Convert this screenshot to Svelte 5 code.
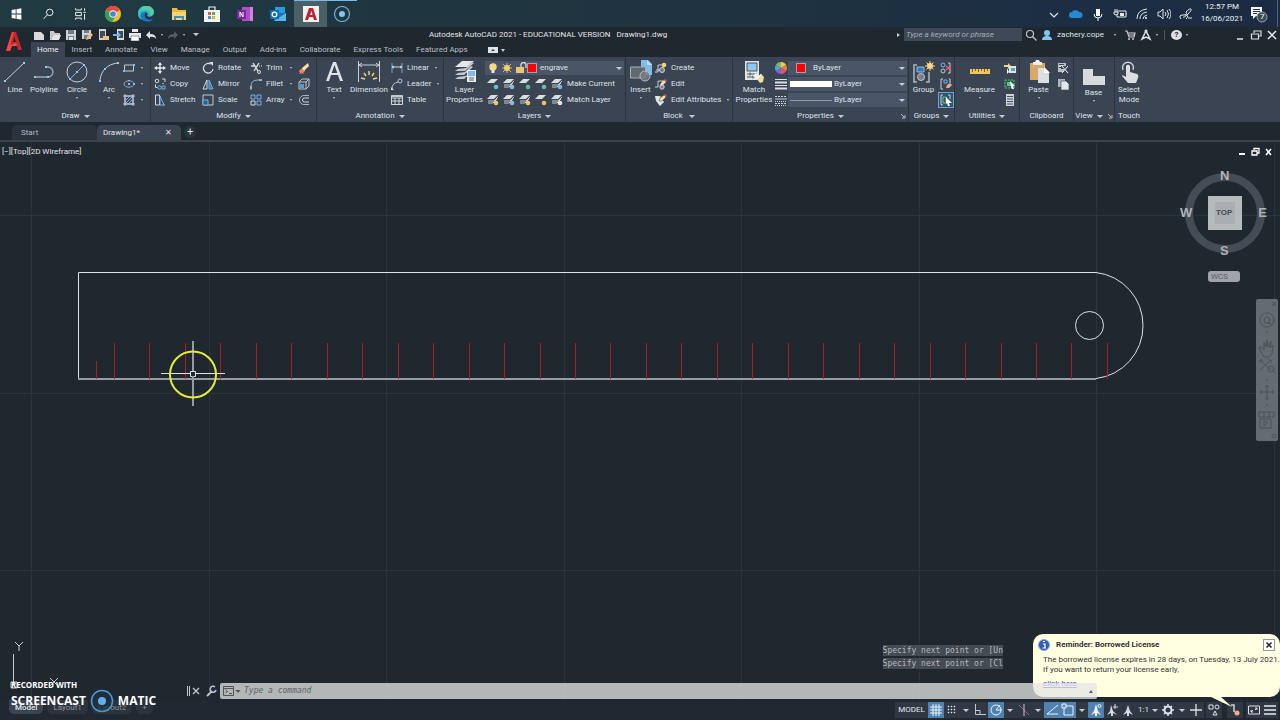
<script>
	const big = {
		line: '<path d="M2 21 21 3" stroke="#c9cfd6"/><path d="M1 20h2v2H1zM20 2h2v2h-2z" fill="#9fd0f5"/>',
		polyline: '<path d="M3 17h13a5 5 0 0 0 0-10h-3" fill="none" stroke="#9aaabd" stroke-width="1.3"/><path d="M2 16h2v2H2zM15 16h2v2h-2zM13 6h2v2h-2z" fill="#8fc6f2"/>',
		circle: '<circle cx="12" cy="12" r="10" fill="none" stroke="#c9cfd6"/><path d="M5 19 19 5" stroke="#7fb4dd"/><path d="M4 18h2v2H4zM11 11h2v2h-2zM18 4h2v2h-2z" fill="#8fc6f2"/>',
		arc: '<path d="M3 20C4 11 10 4 21 3" fill="none" stroke="#c9cfd6"/><path d="M2 20h2v2H2zM7 8h2v2H7zM20 2h2v2h-2z" fill="#8fc6f2"/>',
		text: '<path d="M4 21 11 2h3l7 19h-3l-2-6H9l-2 6zM9.700 13h5.600L12.500 5z" fill="#dfe3e7"/>',
		dimension: '<path d="M1.500 1v21M22.500 1v21M2 5h20M5 3 2 5l3 2M19 3l3 2-3 2" fill="none" stroke="#c9cfd6"/><path d="M12 11v4M7 13l2 3M17 13l-2 3M4 18l4 1M20 18l-4 1" stroke="#f0d080" stroke-width="1.500"/>',
		layers: '<path d="M9 1h12l-7 6H2z" fill="#e4e7e9"/><path d="M5 9 2 11h10l9-8-3-1-5 6zM5 13l-3 2h9l9-8-2-1-6 6zM5 17l-3 2h9l6-5-5 2z" fill="#c3c8cd"/><path d="M14 10h9v12h-9z" fill="#e9ecee"/><path d="M15 11h7v5h-7z" fill="#79bdf0"/><path d="M16 18h5M16 20h5" stroke="#667"/>',
		insert: '<path d="M12 0h7l4 4v11H12z" fill="#7ebdeb"/><path d="M18 0v5h5z" fill="#b9e0fb"/><path d="M1.500 7h15v11h-15z" fill="#626970" stroke="#a9afb5"/><circle cx="16" cy="16" r="5" fill="#767d84" fill-opacity=".8" stroke="#b5babf"/>',
		match: '<path d="M3 1h14v19H3z" fill="#e2e4e6"/><path d="M5 3h10v8H5z" fill="#8fc8ef" stroke="#4d5661"/><path d="M5 14h10M5 17h9M8 12.500v3M11 15.500v3" stroke="#4d5661"/><path d="m11 16 3-3 3 3-3 3z" fill="#eee"/><path d="m14 18 5-4 3 3-1 5-3 1z" fill="#f2d9a0"/><path d="m14 18 5-4 1 1-5 4z" fill="#fff"/>',
		group: '<path d="M5 5H2v17h3M15 5h2M14 22h3V12" fill="none" stroke="#aeb6be" stroke-width="1.500"/><path d="M5 7h7v5H5z" fill="#3e78a4" stroke="#83c0ed"/><circle cx="9" cy="17" r="3.500" fill="#777f87" stroke="#bdc4ca"/><circle cx="18" cy="6" r="3" fill="#f7d487"/><path d="M18 1v10M13 6h10M14.500 2.500l7 7M21.500 2.500l-7 7" stroke="#f7d487"/>',
		measure: '<path d="M2 9h20v5H2z" fill="#f3c65b"/><path d="M4.500 9v3M7.500 9v2M10.500 9v3M13.500 9v2M16.500 9v3M19.500 9v2" stroke="#7a6330"/>',
		paste: '<path d="M3 3h15v17H3z" fill="#d9a868"/><path d="M6 5V2h2l1-2h3l1 2h2v3z" fill="#eceff1"/><path d="M11 8h7l4 4v11H11z" fill="#dcdfe2"/><path d="M17 7v6h6z" fill="#fff"/>',
		base: '<path d="M1 6h10v7h12v9H1z" fill="#d8dbde"/>',
		touch: '<path d="M6 10a5.500 5.500 0 1 1 10 0" fill="none" stroke="#cdd2d6" stroke-width="1.400"/><path d="M9 16V6q2-3 4 0v6l7 2q2 1 1 4l-2 5H11l-6-7q0-2 4 1z" fill="#dcdfe2"/>'
	};

	const small = {
		rect: '<path d="M1.500 3h9v6h-9z" fill="none" stroke="#c5ccd3"/><path d="M0 8h2v2H0zM10 2h2v2h-2z" fill="#7fbdf0"/>',
		ellipse: '<ellipse cx="6" cy="6" rx="5" ry="3.200" fill="none" stroke="#8fa7bf"/><path d="M5 5h2v2H5zM5 2h2v1H5zM10 5h2v2h-2z" fill="#7fbdf0"/>',
		hatch: '<path d="M2 2h8v8H2zM0 2h12M0 10h12M2 0v12M10 0v12" fill="none" stroke="#c5ccd3"/><path d="m3 6 3-3M3 9l6-6M6 9l3-3" stroke="#6fb0e5"/>',
		move: '<path d="M6 1v10M1 6h10" stroke="#e6eaee" stroke-width="1.300"/><path d="m6 0 2 3H4zM6 12 4 9h4zM0 6l3-2v4zM12 6 9 8V4z" fill="#e6eaee"/>',
		copy: '<circle cx="3" cy="3" r="1.800" fill="none" stroke="#d5dade"/><path d="M8 1h3v3M1.500 6.500v3h2" fill="none" stroke="#d5dade"/><circle cx="5.500" cy="9.500" r="1.700" fill="none" stroke="#6db4ea"/><path d="M8 8h3v3H8zM8 5.500h2" fill="none" stroke="#6db4ea"/>',
		stretch: '<path d="M1.500 1h4v10h-4z" fill="none" stroke="#d5dade"/><path d="m6 2 4 9H6zM9 11h2" fill="none" stroke="#6db4ea"/>',
		rotate: '<path d="M8.500 2A4.800 4.800 0 1 0 11 7" fill="none" stroke="#dde1e5" stroke-width="1.200"/><path d="M7 0h4v4z" fill="#dde1e5"/>',
		mirror: '<path d="M5 2v9H1z" fill="none" stroke="#d5dade"/><path d="M7 2v9h4z" fill="#3e78a4" stroke="#6db4ea"/>',
		scale: '<path d="M1 1h10v10H1z" fill="none" stroke="#c5ccd3"/><path d="M1 6h5v5H1z" fill="#345f82" stroke="#6db4ea"/>',
		trim: '<path d="m3 1 5 8M9 1 4 9M1 4h4" stroke="#dde1e5" stroke-width="1.400"/><circle cx="9" cy="10" r="1.500" fill="none" stroke="#dde1e5"/><path d="M7 4h5" stroke="#dde1e5" stroke-dasharray="1"/>',
		fillet: '<path d="M1 12V8q0-6 7-6h4" fill="none" stroke="#8fb6d6"/><path d="M1 11V8M9 2h3" stroke="#dde1e5"/>',
		array: '<path d="M1 1h4v4H1zM7 1h4v4H7zM7 7h4v4H7z" fill="none" stroke="#6db4ea"/><path d="M1 7h4v4H1z" fill="none" stroke="#d5dade"/>',
		erase: '<path d="m1 9 3-3 3 3-2 2H2z" fill="#ef7d6d"/><path d="m4 6 6-5 1 3-5 5z" fill="#f4e3a4"/><path d="M1 11.500h5" stroke="#90673f"/>',
		explode: '<path d="M1 4h7v7H1zM1 4l3-3h7v7l-3 3M8 4l3-3" fill="none" stroke="#bcc6cf"/><path d="M2 6h4v4H2z" fill="#4f9bd3"/>',
		offset: '<path d="M11 1.500H6a4.500 4.500 0 0 0 0 9h5" fill="none" stroke="#aab5bf"/><path d="M11 4H6.500a2 2 0 0 0 0 4H11" fill="none" stroke="#d5dade"/>',
		linear: '<path d="M1 1v10M11 1v10" stroke="#71a9d6"/><path d="M1 5h10M3 4 1 5l2 1M9 4l2 1-2 1" fill="none" stroke="#d5dade"/>',
		leader: '<path d="M1 11q0-6 6-7" fill="none" stroke="#b9c1c8"/><circle cx="9" cy="3" r="2" fill="none" stroke="#b9c1c8"/><path d="M0 9v3h3z" fill="#d5dade"/>',
		table: '<path d="M.500 1.500h11v9H.500zM.500 4h11M.500 7h11M4 4v7M8 4v7" fill="none" stroke="#d0d6db"/><path d="M1 1h10v2H1z" fill="#c1c8ce"/>',
		bulb: '<circle cx="6" cy="5" r="3.700" fill="#f8d98a"/><path d="M4.500 8h3v3h-3z" fill="#e5e7e9"/>',
		sun: '<circle cx="6" cy="6" r="3" fill="#f5cf6d"/><path d="M6 1v10M1 6h10M2 2l8 8M10 2l-8 8" stroke="#f5cf6d" stroke-width=".800"/>',
		lock: '<path d="M1 5h8v6H1z" fill="#eec36d"/><path d="M6 5V3a2 2 0 0 1 5 0v3" fill="none" stroke="#d5dade" stroke-width="1.300"/>',
		create: '<path d="M3 3h5v5H1M3 3v7H0" fill="none" stroke="#c9cfd5"/><circle cx="7" cy="8" r="2.500" fill="#777e85" stroke="#c9cfd5"/><circle cx="9" cy="3" r="2.300" fill="#f3cf79"/>',
		edit: '<path d="M3 3h5M3 3v6H0" fill="none" stroke="#c9cfd5"/><circle cx="7" cy="9" r="2.200" fill="#777e85" stroke="#c9cfd5"/><path d="m5 8 1-3 3-3 2 2-3 3z" fill="#efe1b5"/><path d="m9 2 1-1 2 2-1 1z" fill="#e45b54"/>',
		attr: '<path d="M0 2h5l4 6-4 4-4-5z" fill="#e2e5e8"/><path d="m4 7 1-3 4-3 2 2-4 4z" fill="#f3dfaa" stroke="#374150" stroke-width=".500"/><path d="m9 1 1-1 2 2-1 1z" fill="#e45b54"/>',
		wheel: '<path d="M6 6V0a6 6 0 0 1 5.200 3z" fill="#f7c843"/><path d="m6 6 5.200-3a6 6 0 0 1 0 6z" fill="#ef7d45"/><path d="m6 6 5.200 3A6 6 0 0 1 6 12z" fill="#e2527d"/><path d="M6 6v6A6 6 0 0 1 .8 9z" fill="#7569cf"/><path d="M6 6 .8 9a6 6 0 0 1 0-6z" fill="#50a5de"/><path d="M6 6 .8 3A6 6 0 0 1 6 0z" fill="#75c064"/>',
		weight: '<path d="M0 1.500h12" stroke="#dde1e5"/><path d="M0 4.500h12M0 10.500h12" stroke="#dde1e5" stroke-width="2"/><path d="M0 7.500h12" stroke="#dde1e5"/>',
		type: '<path d="M0 2.500h12M0 9.500h12" stroke="#c9cfd5" stroke-dasharray="2 1"/><path d="M0 5h12" stroke="#c9cfd5"/><path d="M0 7.500h12M0 11.500h12" stroke="#c9cfd5" stroke-dasharray="1"/>',
		ungroup: '<circle cx="3" cy="3" r="2" fill="none" stroke="#6db4ea"/><circle cx="3" cy="9" r="2" fill="none" stroke="#bfc6cc"/><path d="M8 1h2v10H8" fill="none" stroke="#cbd1d6"/><path d="m6 4 5 4M11 4 6 8" stroke="#ea5d70" stroke-width="1.300"/>',
		groupedit: '<path d="M3 1H1v10h2M9 1h1v4" fill="none" stroke="#cbd1d6"/><path d="M4 2h3v3H4z" fill="none" stroke="#6db4ea"/><path d="m6 10 1-3 3-2 2 2-3 3z" fill="#efad86"/>',
		groupsel: '<path d="M3 1H1v10h2M8 1h2v4" fill="none" stroke="#cbd1d6"/><path d="M3 3h3v6H3z" fill="none" stroke="#68bf8b"/><path d="m6 3 6 6H9l1 3H8L7 9l-1 1z" fill="#fff"/>',
		quick: '<path d="M0 3h4V1l3 3-3 3V5H0z" fill="#f0d68d"/><path d="M5 4h7v7H5z" fill="#e2e5e8"/><path d="M7 6h4v3H7z" fill="#5f9fcd"/><path d="M3 6v6l2-2z" fill="#fff"/>',
		selectall: '<path d="M1 2h9v8H1z" fill="#285e49" stroke="#5bb487" stroke-dasharray="2 1"/><path d="M3 4h4v4H3z" fill="#65bb8a"/><path d="m6 3 5 5H9l1 3H8L7 9z" fill="#fff"/>',
		calc: '<path d="M2 0h8v12H2z" fill="#cdd2d6"/><path d="M3 2.500h6M3 5h6M3 7.500h6M3 10h6" stroke="#47505d"/>',
		cut: '<path d="M1 1h8v3H4v3h3v3H1z" fill="#b8bec4"/><path d="m5 4 6 7M11 4l-6 7M2 3h5M2 5h2" stroke="#eceff1"/><path d="M2 2.500h5M2 5.500h3" stroke="#3b4453"/>',
		copyclip: '<path d="M1 1h7v8H1z" fill="#aeb5bb"/><path d="M4 3h5l3 3v6H4z" fill="#e3e6e9" stroke="#3b4453" stroke-width=".600"/>'
	};

	// [colour, stacked sheets] for the ten layer tools
	const layerTools = [
		['#5fc5c8', false], ['#8eb8dc', true], ['#5fb7a0', false], ['#69bcb4', false], ['#7ab5df', true],
		['#f2c76a', true], ['#8eb8dc', true], ['#f2c76a', true], ['#edc065', false], ['#e2e5e8', true]
	];

	const quick = {
		fresh: '<path d="M1 3h7l3 3v5H1z" fill="#d8dbde"/>',
		open: '<path d="M1 2h4l1 2h5v2H4l-2 5H1z" fill="#c4c9ce"/><path d="M4 6h8l-2 5H2z" fill="#e2e5e8"/>',
		save: '<path d="M1 1h10v10H1z" fill="#cfd3d7"/><path d="M3 1h6v4H3zM3 7h6v4H3z" fill="#737b84"/><path d="M4 8h4v3H4z" fill="#e5e8ea"/>',
		saveas: '<path d="M1 1h9v9H1z" fill="#cfd3d7"/><path d="M3 1h5v3H3zM3 6h5v4H3z" fill="#737b84"/><path d="m5 11 1-3 4-4 2 2-4 4z" fill="#efbc7e"/>',
		web: '<path d="M2 0h7v11H2z" fill="#cfd3d7"/><path d="M3 2h5v7H3z" fill="#454d57"/><path d="M6 7h6v4H6z" fill="#e8c578"/>',
		webin: '<path d="M4 0h7v11H4z" fill="#d8dbde"/><path d="M5 2h5v7H5z" fill="#454d57"/><path d="M0 5h5V3l3 3-3 3V7H0z" fill="#6db4ea"/>',
		print: '<path d="M3 0h6v3H3zM0 4h12v5H0z" fill="#e6e8ea"/><path d="M2 7h8v5H2z" fill="#fff" stroke="#66707b" stroke-width=".700"/>',
		undo: '<path d="m1 6 4-4v3q6 0 6 5-2-3-6-2v2z" fill="#dfe3e7"/>',
		redo: '<path d="M11 6 7 2v3Q1 5 1 10q2-3 6-2v2z" fill="#555e68"/>'
	};

	const apps = {
		windows: '<path d="m2 3 5-.700v5.200H2zM8 2.200 14 1v6.500H8zM2 8.500h5v5.200L2 13zM8 8.500h6V15l-6-1.200z" fill="#fff"/>',
		search: '<circle cx="9.500" cy="6" r="4" fill="none" stroke="#f2f4f5" stroke-width="1.200"/><path d="M6.500 9 2 14" stroke="#f2f4f5" stroke-width="1.200"/>',
		task: '<path d="M2 1v2h7V1M2 6h7v4H2zM2 15v-2h7v2M13 1v3M13 8v7M11.500 6h3" fill="none" stroke="#f2f4f5" stroke-width="1.200"/>',
		chrome: '<circle cx="8" cy="8" r="8" fill="#f2bd2e"/><path d="M8 8 1 4A8 8 0 0 1 15 4z" fill="#df4d3e"/><path d="M1 4a8 8 0 0 0 6 12l4-6-3-1z" fill="#399c58"/><circle cx="8" cy="8" r="3.700" fill="#eef0ef"/><circle cx="8" cy="8" r="2.800" fill="#4387dc"/>',
		edge: '<path d="M0 9A8 8 0 0 1 15.800 6c.8 4-4 6-6.800 4 2-2 0-4-2-4-3 0-6 4-2 8-3-.5-5-3-5-5z" fill="#2fbfc3"/><path d="M5 6q-4 2-2 6 3 5 10 3l2-2c-6 2-9-1-8-5q0-2 2-2-1-1-4 0z" fill="#1c78c6"/><path d="M1 6Q3 0 9 0q5 0 7 5c0 3-2 5-4 4 2-4-4-7-11-3z" fill="#58cba3"/>',
		folder: '<path d="M1 2h5l1 2h8v10H1z" fill="#edb83e"/><path d="M1 6h14v8H1z" fill="#f8d568"/><path d="M3 10h10v4h-2v-2H5v2H3z" fill="#438ac1"/>',
		store: '<path d="M5 4V1h6v3" fill="none" stroke="#eef1f3" stroke-width="1.200"/><path d="M0 4h16v12H0z" fill="#f3f4f4"/><path d="M4 6h3v3H4z" fill="#e65b3b"/><path d="M8 6h3v3H8z" fill="#72a93b"/><path d="M4 10h3v3H4z" fill="#389ad2"/><path d="M8 10h3v3H8z" fill="#e8ae32"/>',
		onenote: '<path d="M5 1h11v14H5z" fill="#ae4fc5"/><path d="M13 1h3v14h-3z" fill="#cf83df"/><path d="M0 4h9v9H0z" fill="#7d26a0"/><path d="M3 11V6l3 5V6" fill="none" stroke="#fff"/>',
		outlook: '<path d="M5 1h10v9H5z" fill="#2c9ade"/><path d="M4 7h12v8H4z" fill="#1a70b9"/><path d="m4 15 12-8v8z" fill="#55b8ec"/><path d="M0 4h9v9H0z" fill="#126cb7"/><circle cx="4.500" cy="8.500" r="2.300" fill="none" stroke="#fff" stroke-width="1.300"/>',
		acad: '<path d="M0 0h16v16H0z" fill="#f3efed"/><path d="M2 14 6 2h4l4 12h-3l-1-3H6l-1 3zM7 9h2.500L8.500 5z" fill="#b72531"/>',
		screencast: '<circle cx="8" cy="8" r="7.500" fill="none" stroke="#70aed7" stroke-width="1.200"/><circle cx="8" cy="8" r="3" fill="#86c5ef"/>'
	};

	const tray = {
		up: '<path d="m3 6 4 4 4-4" fill="none" stroke="#dfe4e8" stroke-width="1.200"/>',
		cloud: '<path d="M3 11a3 3 0 0 1 0-6 4 4 0 0 1 7 0 3 3 0 0 1 1 6z" fill="#2489d6"/>',
		mic: '<path d="M5 2h4v7H5z" fill="#fff"/><path d="M3 7q0 4 4 4t4-4M7 11v3" fill="none" stroke="#fff"/>',
		battery: '<path d="M5 4h8v6H4V7M14 6v2M2 2v3M4 2v3M1 5h4v2q-2 2-4 0z" fill="none" stroke="#e4e8eb"/><path d="M7 6h4v3H7z" fill="#e4e8eb"/>',
		wifi: '<path d="M2 12Q2 3 12 2M5 12q0-6 7-7M8 12q0-3 4-4" fill="none" stroke="#dce1e6"/><circle cx="11" cy="11" r="1" fill="#fff"/>',
		sound: '<path d="M1 5h2l3-3v10L3 9H1zM8 5q2 2 0 4M10 3q3 4 0 8M12 2q4 5 0 10" fill="none" stroke="#dce1e6"/>',
		pen: '<path d="M2 12q-3-4 2-4t3-3q4-4 5-3t-3 5-5 3M7 12q4-4-1-4M9 11h4" fill="none" stroke="#e4e8eb"/>'
	};

	const status = {
		grid: '<path d="M4 1v12M7 1v12M10 1v12M1 4h12M1 7h12M1 10h12" stroke="#f0f3f6"/>',
		snap: '<path d="M3 3h1v1H3zM6 3h1v1H6zM9 3h1v1H9zM3 6h1v1H3zM6 6h1v1H6zM9 6h1v1H9zM3 9h1v1H3zM6 9h1v1H6zM9 9h1v1H9z" fill="#e0e4e8" stroke="#e0e4e8" stroke-width=".500"/>',
		ortho: '<path d="M2.500 1v10.500H13M3 7.500h4v4" fill="none" stroke="#c2c8cf"/>',
		polar: '<circle cx="7" cy="7" r="5" fill="none" stroke="#eef2f6"/><path d="M7 7h6M7 7l4-5" stroke="#eef2f6"/>',
		iso: '<path d="m2 2 10 10" stroke="#b85763"/><path d="M7 1v12" stroke="#c2c8cf"/>',
		angle: '<path d="M13 2 2 11h11" fill="none" stroke="#eef2f6"/>',
		osnap: '<path d="M3 3h9v9H3z" fill="none" stroke="#eef2f6"/><path d="M1 1h4v4H1z" fill="#5d8fbd" stroke="#eef2f6"/>',
		ann: '<path d="m7 1 2 7 3 4-4-2v3H6v-3l-4 2 3-4z" fill="#f0f3f6"/><circle cx="10.500" cy="3" r="1.500" fill="none" stroke="#f0f3f6"/>',
		annadd: '<path d="m6 2 2 6 4 4-4-2v3H6v-3l-4 2 3-4z" fill="#d5dade"/><path d="M10 1v5M8 4h5" stroke="#d5dade"/>',
		annscale: '<path d="m7 2 2 6 3 4-4-2v3H6v-3l-4 2 3-4z" fill="#d5dade"/>',
		gear: '<circle cx="7" cy="7" r="3.500" fill="none" stroke="#e0e4e8" stroke-width="2"/><path d="M7 1v3M7 10v3M1 7h3M10 7h3M3 3l2 2M9 9l2 2M11 3 9 5M5 9l-2 2" stroke="#e0e4e8" stroke-width="1.500"/>',
		plus: '<path d="M7 1v12M1 7h12" stroke="#dce0e4" stroke-width="1.300"/>',
		shapes: '<path d="M2 2h4v4H2zM6 12l2-4 2 4z" fill="none" stroke="#dce0e4"/><circle cx="10" cy="4" r="2" fill="none" stroke="#dce0e4"/>',
		license: '<path d="M3 2h3v7" fill="none" stroke="#cdd2d6" stroke-width="1.500"/><circle cx="9" cy="10" r="2.500" fill="#eeae89"/>',
		clean: '<path d="M1.500 3h11v8h-11zM4 9V7M4 9h2M10 5H8M10 5v2M4 9l2-2M10 5 8 7" fill="none" stroke="#dce0e4"/>',
		menu: '<path d="M1 3h12M1 7h12M1 11h12" stroke="#e4e8eb" stroke-width="1.600"/>'
	};

	const tabs = ['Home', 'Insert', 'Annotate', 'View', 'Manage', 'Output', 'Add-ins', 'Collaborate', 'Express Tools', 'Featured Apps'];
	const columns = [31, 209, 386, 564, 741, 919, 1096, 1274];
	const marks = Array.from({ length: 29 }, (_, i) => Math.round(114 + i * 35.46));
	let command = $state('');
	let keyword = $state('');
</script>

{#snippet pic(set, name, size, box = size)}
	<svg class="pic" width={size} height={size} viewBox="0 0 {box} {box}" aria-hidden="true">{@html set[name]}</svg>
{/snippet}

{#snippet large(name, label, second = '', caret = true)}
	<button class="large">
		{@render pic(big, name, 24)}
		<span>{label}</span>
		{#if second}<span>{second}</span>{:else if caret}<i class="caret"></i>{/if}
	</button>
{/snippet}

{#snippet tool(name, label = '', caret = false)}
	<button class="tool" aria-label={label || name}>
		{@render pic(small, name, 12)}
		{#if label}<span>{label}</span>{/if}
		{#if caret}<i class="caret"></i>{/if}
	</button>
{/snippet}

{#snippet layerTool(i)}
	<button class="tool" aria-label="Layer tool {i + 1}">
		<svg class="pic" width="12" height="12" viewBox="0 0 12 12">
			<path d="M4 1h7L7 5H0z" fill="#d9dde0" />
			{#if layerTools[i][1]}
				<path d="M1 7h6l4-4M1 9h5l4-4" fill="none" stroke="#c6cbd0" />
			{/if}
			<circle cx="9" cy="9" r="2.3" fill={layerTools[i][0]} />
		</svg>
	</button>
{/snippet}

{#snippet title(label, arrow = true, corner = false)}
	<div class="panel-title">
		<span>{label}</span>
		{#if arrow}<i class="caret wide"></i>{/if}
		{#if corner}
			<svg width="6" height="6" viewBox="0 0 6 6"><path d="m1 1 3 3M5 2v3H2" fill="none" stroke="#b9bfc7" /></svg>
		{/if}
	</div>
{/snippet}

{#snippet stat(name, on = false, caret = false)}
	<button class="stat {name}" class:on aria-label={name}>{@render pic(status, name, 14)}</button>
	{#if caret}<button class="stat drop" aria-label="{name} options"><i class="caret wide"></i></button>{/if}
{/snippet}

<div class="screen">
	<div class="taskbar">
		<div class="apps">
			{#each Object.keys(apps) as app}
				<button class="app" class:active={app === 'acad'} class:running={app === 'screencast'} aria-label={app}>
					{@render pic(apps, app, 16)}
				</button>
			{/each}
		</div>
		<div class="tray">
			{#each Object.keys(tray) as item}
				<button aria-label={item}>{@render pic(tray, item, 14)}</button>
			{/each}
			<div class="clock"><span>12:57 PM</span><span>16/06/2021</span></div>
			<button class="notes" aria-label="Notifications">
				<svg width="18" height="18" viewBox="0 0 18 18">
					<path d="M1 2h11v9H6l-3 3v-3H1z" fill="#f3f5f6" />
					<path d="M3 4.500h7M3 6.500h7M3 8.500h4" stroke="#26364b" />
					<circle cx="12" cy="12" r="5" fill="#3c4858" stroke="#98a2ae" />
				</svg>
				<em>7</em>
			</button>
		</div>
	</div>

	<header>
		<button class="logo" aria-label="Application menu">
			<svg width="18" height="22" viewBox="0 0 18 22">
				<path d="M1 20 7 1h4l6 18h-4l-1-4H7l-2 5zM8 11h3L9.500 6z" fill="#c9252c" />
				<path d="M1 20 7 1h2L5 14l6-2 1 3H7l-2 5z" fill="#ee4a43" />
			</svg>
		</button>
		<div class="head">
			<div class="titlebar">
				<div class="quick">
					{#each Object.keys(quick) as q}
						<button aria-label={q}>{@render pic(quick, q, 12)}</button>
						{#if q === 'undo' || q === 'redo'}<i class="caret"></i>{/if}
					{/each}
					<i class="caret wide bar"></i>
				</div>
				<h1>Autodesk AutoCAD 2021 - EDUCATIONAL VERSION <span>Drawing1.dwg</span></h1>
				<div class="account">
					<i class="right"></i>
					<input aria-label="Search help" placeholder="Type a keyword or phrase" bind:value={keyword} />
					<svg width="12" height="12" viewBox="0 0 12 12"><circle cx="5" cy="5" r="3.500" fill="none" stroke="#bfc5cb" stroke-width="1.200" /><path d="m7.500 7.500 4 4" stroke="#bfc5cb" stroke-width="1.300" /></svg>
					<button class="user">
						<svg width="12" height="12" viewBox="0 0 12 12"><circle cx="6" cy="4" r="3" fill="#84c7f0" /><path d="M1 11q0-4 5-4t5 4z" fill="#84c7f0" /></svg>
						<span>zachery.cope</span>
						<i class="caret"></i>
					</button>
					<svg width="12" height="12" viewBox="0 0 12 12"><path d="M1 2h2l2 6h5l1-4H4M5 6h5" fill="none" stroke="#c9ced3" stroke-width="1.200" /><circle cx="5" cy="10" r="1" fill="#c9ced3" /><circle cx="9" cy="10" r="1" fill="#c9ced3" /></svg>
					<button class="share" aria-label="Autodesk apps">
						<svg width="12" height="12" viewBox="0 0 12 12"><path d="m6 2-4 8 4-2 4 2z" fill="none" stroke="#dce0e3" stroke-width="1.500" /><circle cx="6" cy="2" r="1.500" fill="#dce0e3" /></svg>
						<i class="caret"></i>
					</button>
					<button class="help" aria-label="Help"><b>?</b><i class="caret"></i></button>
					<div class="window">
						<svg width="12" height="12" viewBox="0 0 12 12"><path d="M3 10h6" stroke="#e2e5e8" stroke-width="1.500" /></svg>
						<svg width="12" height="12" viewBox="0 0 12 12"><path d="M4 4V2h7v5H9M1.500 5h7v5h-7z" fill="none" stroke="#dce0e3" stroke-width="1.200" /></svg>
						<svg width="12" height="12" viewBox="0 0 12 12"><path d="m2 2 8 8M10 2l-8 8" stroke="#e9ecee" stroke-width="1.500" /></svg>
					</div>
				</div>
			</div>
			<nav>
				{#each tabs as tab, i}
					<button class:current={i === 0}>{tab}</button>
				{/each}
				<svg width="24" height="8" viewBox="0 0 24 8"><path d="M3 1h10v6H3z" fill="#e1e4e7" /><path d="m6 5 2-2 2 2z" fill="#343c47" /><path d="M16 3h4l-2 3z" fill="#cbd0d5" /></svg>
			</nav>
		</div>
	</header>

	<div class="ribbon">
		<section class="draw">
			<div class="body">
				{@render large('line', 'Line', '', false)}
				{@render large('polyline', 'Polyline', '', false)}
				{@render large('circle', 'Circle')}
				{@render large('arc', 'Arc')}
				<div class="stack">
					{@render tool('rect', '', true)}
					{@render tool('ellipse', '', true)}
					{@render tool('hatch', '', true)}
				</div>
			</div>
			{@render title('Draw')}
		</section>
		<section class="modify">
			<div class="body">
				<div class="stack">{@render tool('move', 'Move')}{@render tool('copy', 'Copy')}{@render tool('stretch', 'Stretch')}</div>
				<div class="stack">{@render tool('rotate', 'Rotate')}{@render tool('mirror', 'Mirror')}{@render tool('scale', 'Scale')}</div>
				<div class="stack">{@render tool('trim', 'Trim', true)}{@render tool('fillet', 'Fillet', true)}{@render tool('array', 'Array', true)}</div>
				<div class="stack">{@render tool('erase')}{@render tool('explode')}{@render tool('offset')}</div>
			</div>
			{@render title('Modify')}
		</section>
		<section class="annotation">
			<div class="body">
				{@render large('text', 'Text')}
				{@render large('dimension', 'Dimension', '', false)}
				<div class="stack">{@render tool('linear', 'Linear', true)}{@render tool('leader', 'Leader', true)}{@render tool('table', 'Table')}</div>
			</div>
			{@render title('Annotation')}
		</section>
		<section class="layers">
			<div class="body">
				{@render large('layers', 'Layer', 'Properties')}
				<div class="stack">
					<button class="combo">
						{@render pic(small, 'bulb', 12)}{@render pic(small, 'sun', 12)}{@render pic(small, 'lock', 12)}
						<i class="swatch"></i><span>engrave</span><i class="caret wide"></i>
					</button>
					<div class="row">
						{#each [0, 1, 2, 3, 4] as i}{@render layerTool(i)}{/each}
						<span>Make Current</span>
					</div>
					<div class="row">
						{#each [5, 6, 7, 8, 9] as i}{@render layerTool(i)}{/each}
						<span>Match Layer</span>
					</div>
				</div>
			</div>
			{@render title('Layers')}
		</section>
		<section class="block">
			<div class="body">
				{@render large('insert', 'Insert')}
				<div class="stack">{@render tool('create', 'Create')}{@render tool('edit', 'Edit')}{@render tool('attr', 'Edit Attributes', true)}</div>
			</div>
			{@render title('Block')}
		</section>
		<section class="properties">
			<div class="body">
				{@render large('match', 'Match', 'Properties')}
				<div class="stack">{@render tool('wheel')}{@render tool('weight')}{@render tool('type')}</div>
				<div class="stack fields">
					<button class="combo"><i class="swatch"></i><span>ByLayer</span><i class="caret wide"></i></button>
					<button class="combo"><i class="weight"></i><span>ByLayer</span><i class="caret wide"></i></button>
					<button class="combo"><i class="weight thin"></i><span>ByLayer</span><i class="caret wide"></i></button>
				</div>
			</div>
			{@render title('Properties', true, true)}
		</section>
		<section class="groups">
			<div class="body">
				{@render large('group', 'Group', '', false)}
				<div class="stack picked">{@render tool('ungroup')}{@render tool('groupedit')}{@render tool('groupsel')}</div>
			</div>
			{@render title('Groups')}
		</section>
		<section class="utilities">
			<div class="body">
				{@render large('measure', 'Measure')}
				<div class="stack">{@render tool('quick')}{@render tool('selectall')}{@render tool('calc')}</div>
			</div>
			{@render title('Utilities')}
		</section>
		<section class="clipboard">
			<div class="body">
				{@render large('paste', 'Paste')}
				<div class="stack">{@render tool('cut')}{@render tool('copyclip')}</div>
			</div>
			{@render title('Clipboard', false)}
		</section>
		<section class="view">
			<div class="body">{@render large('base', 'Base')}</div>
			{@render title('View', true, true)}
		</section>
		<section class="touch">
			<div class="body">{@render large('touch', 'Select', 'Mode')}</div>
			{@render title('Touch', false)}
		</section>
	</div>

	<div class="files">
		<button class="file">Start</button>
		<button class="file open"><span>Drawing1*</span><span>✕</span></button>
		<button class="add" aria-label="New drawing">+</button>
	</div>

	<main>
		<svg class="drawing" viewBox="0 142 1280 558" preserveAspectRatio="xMinYMin slice" role="img" aria-label="Ruler drawing">
			<g stroke="#2a323a">
				{#each columns as x}<path d="M{x + 0.5} 142v558" />{/each}
				<path d="M0 215.500h1280M0 393.500h1280M0 570.500h1280" />
			</g>
			<path d="M1096 272.500H78.500v106M1096 378.500a53 53 0 0 0 47-53 53 53 0 0 0-47-53" fill="none" stroke="#dde2e6" />
			<path d="M78 379h1018" stroke="#969ca2" stroke-width="2" />
			<g fill="#b01a20">
				<path d="M96 361h1v18h-1z" />
				{#each marks as x}<path d="M{x} 343h1v36h-1z" />{/each}
			</g>
			<circle cx="1089.500" cy="325.500" r="14" fill="none" stroke="#dde2e6" />
			<path d="M161 373.500h29M196 373.500h29M190.500 371.500h5v5h-5z" fill="none" stroke="#dde2e6" />
			<path d="M193 341v30M193 376v30" stroke="#969ca2" stroke-width="2" />
			<circle cx="193" cy="374.500" r="23" fill="none" stroke="#e8ea3a" stroke-width="2" />
			<g fill="none" stroke="#c8cdd2">
				<path d="M13.500 654v31M15 642l4 4 4-4M19 646v5M50 678l8 8M58 678l-8 8M11 682h6v6h-6z" />
			</g>
		</svg>

		<div class="viewport"><button>[−]</button><button>[Top]</button><button>[2D Wireframe]</button></div>
		<div class="inner">
			<svg width="40" height="10" viewBox="0 0 40 10"><path d="M4 7h6" stroke="#fff" stroke-width="2" /><path d="M17 4h5v4h-5zM19 3V1.500h5V6h-2" fill="none" stroke="#fff" stroke-width="1.300" /><path d="m31 2 5 6M36 2l-5 6" stroke="#fff" stroke-width="1.600" /></svg>
		</div>

		<div class="compass">
			<svg width="90" height="90" viewBox="0 0 90 90">
				<circle cx="45" cy="45" r="36" fill="none" stroke="#444c56" stroke-width="8" />
				<path d="M28 28h34v34H28z" fill="#b5babc" />
				<path d="M35 34h20v22H35z" fill="#a9aeb1" />
			</svg>
			<b class="n">N</b><b class="e">E</b><b class="s">S</b><b class="w">W</b><b class="top">TOP</b>
		</div>
		<button class="wcs">WCS</button>
		<div class="navbar">
			<svg width="22" height="142" viewBox="0 0 22 142" fill="none" stroke="#4b5357">
				<circle cx="11" cy="21" r="7" /><circle cx="11" cy="21" r="3" /><path d="M11 24q7 3 7-3M10 33h2M5 53l-2-4 2-1 3 3v-8l2 5 1-7 1 7 3-6-1 7 3-3-1 9-3 3H8zM4 61l11 10M15 61 4 71M4 64v-3h3M12 61h3v3" />
				<circle cx="15" cy="70" r="3" /><path d="m17 72 3 3M10 81h2M11 86v15M4 93h14M9 88l2-2 2 2M9 99l2 2 2-2M6 91l-2 2 2 2M16 91l2 2-2 2M10 106h2M3 113h15v5H3zM8 113v5M13 113v5M4 120h11v9H4zM8 122l4 2-4 3z" />
				<path d="m16 3 4 4M20 3l-4 4" /><circle cx="18" cy="137" r="2" />
			</svg>
		</div>

		<div class="history"><p>Specify next point or [Un</p><p>Specify next point or [Cl</p></div>

		<aside class="balloon">
			<div class="balloon-head">
				<svg width="12" height="12" viewBox="0 0 12 12"><circle cx="6" cy="6" r="5.500" fill="#2e5fb5" stroke="#8caad8" /><path d="M5 5h2v4h1M4.500 9H8M5 2.500h2" stroke="#fff" stroke-width="1.200" fill="none" /></svg>
				<strong>Reminder: Borrowed License</strong>
				<button aria-label="Close reminder"><svg width="8" height="8" viewBox="0 0 8 8"><path d="m1.500 1.500 5 5M6.500 1.500l-5 5" stroke="#222" stroke-width="1.500" /></svg></button>
			</div>
			<p>The borrowed license expires in 28 days, on Tuesday, 13 July 2021.</p>
			<p>If you want to return your license early,</p>
			<a href="#license">click here</a>
			<svg class="tail" width="24" height="12" viewBox="0 0 24 12"><path d="M0 0h11l12 11z" fill="#ffffe1" /></svg>
		</aside>

		<div class="command">
			<div class="grip">
				<svg width="34" height="16" viewBox="0 0 34 16" fill="none" stroke="#c0c6cc"><path d="M1.500 3v10M3.500 3v10" /><path d="m7 5 6 6M13 5l-6 6" stroke-width="1.300" /><path d="m21 13 5-5" stroke-width="1.800" /><path d="M29 4a3 3 0 1 0 1 3" stroke-width="1.500" /></svg>
			</div>
			<label>
				<svg width="18" height="12" viewBox="0 0 18 12"><path d="M.500 1.500h10v9H.500zM.500 3.500h10M2.500 5l2 1.500-2 1.500M6 8.500h3" fill="none" stroke="#4d5458" /><path d="M12.500 5h5L15 8z" fill="#4d5458" /></svg>
				<input aria-label="Command line" placeholder="Type a command" bind:value={command} />
				<i class="upward"></i>
			</label>
		</div>
	</main>

	<footer>
		<div class="layouts"><button class="model">Model</button><button>Layout1</button><button>Layout2</button><button>+</button></div>
		<div class="modes">
			<button class="stat word">MODEL</button>
			{@render stat('grid', true)}{@render stat('snap', false, true)}
			{@render stat('ortho')}{@render stat('polar', true, true)}
			{@render stat('iso', false, true)}{@render stat('angle', true)}{@render stat('osnap', true, true)}
			{@render stat('ann', true)}{@render stat('annadd')}{@render stat('annscale')}
			<button class="stat ratio">1:1<i class="caret wide"></i></button>
			{@render stat('gear', false, true)}{@render stat('plus')}{@render stat('shapes')}{@render stat('license')}
			{@render stat('clean')}{@render stat('menu')}
		</div>
	</footer>

	<div class="watermark">
		<small>RECORDED WITH</small>
		<div>
			<span>SCREENCAST</span>
			<svg width="24" height="24" viewBox="0 0 24 24"><circle cx="12" cy="12" r="10.500" fill="#20303f" fill-opacity=".7" stroke="#4c9ad0" stroke-width="1.500" /><circle cx="12" cy="12" r="4" fill="#5eb0ea" /></svg>
			<span>MATIC</span>
		</div>
	</div>
</div>

<style>
	:global(body) {
		margin: 0;
		background: #20282f;
	}
	.screen {
		position: relative;
		display: flex;
		flex-direction: column;
		height: 100vh;
		overflow: hidden;
		color: #dfe3e7;
		background: #20282f;
		font: 8px/10px Roboto, 'Open Sans', sans-serif;
	}
	button,
	input {
		margin: 0;
		padding: 0;
		border: 0;
		background: none;
		color: inherit;
		font: inherit;
	}
	button {
		display: flex;
		align-items: center;
		white-space: nowrap;
	}
	svg {
		display: block;
		flex: none;
	}
	.caret {
		flex: none;
		width: 0;
		border: 1px solid transparent;
		border-top: 2px solid #c8cdd3;
		border-bottom: 0;
	}
	.caret.wide {
		border-width: 3px 3px 0;
	}

	.taskbar {
		display: flex;
		flex: none;
		justify-content: space-between;
		height: 27px;
		background: linear-gradient(90deg, #203a42, #1f3440 50%, #1b2b43);
	}
	.apps,
	.tray {
		display: flex;
	}
	.app {
		justify-content: center;
		width: 33px;
		border-top: 1px solid transparent;
	}
	.app:nth-child(-n + 3) {
		width: 32px;
	}
	.app:nth-child(-n + 3) svg {
		width: 13px;
	}
	.app.active {
		background: #4a6066;
		border-color: #79b9e6;
	}
	.app.running {
		width: 30px;
		border-color: #79b9e6;
	}
	.tray {
		border-right: 1px solid #53627a;
		margin-right: 2px;
	}
	.tray button {
		justify-content: center;
		width: 22px;
	}
	.clock {
		display: flex;
		flex-direction: column;
		align-items: center;
		width: 50px;
		padding-top: 1px;
		color: #f0f2f4;
		font-size: 8px;
		line-height: 12px;
	}
	.tray .notes {
		position: relative;
		width: 30px;
		padding-left: 3px;
		box-sizing: border-box;
		justify-content: flex-start;
	}
	.notes em {
		position: absolute;
		left: 13px;
		top: 12px;
		font-style: normal;
		color: #fff;
	}

	header {
		display: flex;
		flex: none;
		height: 30px;
	}
	.logo {
		width: 31px;
		padding-left: 5px;
	}
	.head {
		flex: 1;
	}
	.titlebar {
		display: flex;
		align-items: center;
		height: 15px;
	}
	.quick,
	.account,
	.window {
		display: flex;
		align-items: center;
	}
	.quick {
		gap: 4px;
		width: 396px;
		padding-left: 2px;
	}
	.quick .bar {
		margin-left: 4px;
	}
	h1 {
		display: flex;
		gap: 6px;
		margin: 0;
		color: #e2e5e8;
		font-size: 8px;
		font-weight: 400;
		white-space: nowrap;
	}
	.account {
		margin-left: auto;
	}
	.right {
		border: 2px solid transparent;
		border-left: 3px solid #d0d4d8;
		border-right: 0;
		margin-right: 4px;
	}
	.account input {
		width: 114px;
		height: 13px;
		padding: 0 2px;
		margin-right: 3px;
		background: #3e4856;
		font-style: italic;
	}
	input::placeholder {
		color: #a6adb6;
		opacity: 1;
	}
	.user {
		gap: 4px;
		margin: 0 8px 0 4px;
	}
	.user .caret {
		margin-left: 6px;
	}
	.share {
		gap: 4px;
		margin: 0 6px 0 4px;
	}
	.help {
		gap: 4px;
		padding-left: 6px;
		border-left: 1px solid #4d555f;
		margin-right: 46px;
	}
	.help b {
		width: 11px;
		border-radius: 50%;
		background: #dce0e3;
		color: #252c35;
		text-align: center;
	}
	.window {
		gap: 4px;
		padding-right: 2px;
	}
	nav {
		display: flex;
		align-items: center;
		height: 15px;
		color: #b9bfc7;
	}
	nav button {
		height: 15px;
		padding: 0 6px 0 7px;
	}
	nav .current {
		padding: 0 6px;
		background: #3b4453;
		color: #eceff1;
	}
	nav svg {
		margin-left: 11px;
	}

	.ribbon {
		display: flex;
		flex: none;
		height: 65px;
		padding-left: 1px;
		background: #3b4453;
	}
	section {
		box-sizing: border-box;
		flex: none;
		display: flex;
		flex-direction: column;
		justify-content: space-between;
		border-right: 1px solid #2c343f;
	}
	.draw {
		width: 150px;
	}
	.modify {
		width: 166px;
	}
	.annotation {
		width: 127px;
	}
	.layers {
		width: 182px;
	}
	.block {
		width: 107px;
	}
	.properties {
		width: 176px;
	}
	.groups {
		width: 46px;
	}
	.utilities {
		width: 65px;
	}
	.clipboard {
		width: 54px;
	}
	.view {
		width: 41px;
	}
	.touch {
		flex: 1;
		align-items: flex-start;
		border: 0;
	}
	.body {
		display: flex;
		padding-top: 3px;
	}
	.panel-title {
		position: relative;
		display: flex;
		align-items: center;
		justify-content: center;
		gap: 4px;
		height: 12px;
	}
	.properties .panel-title svg {
		position: absolute;
		right: 2px;
	}
	.large {
		flex: none;
		flex-direction: column;
		width: 28px;
	}
	.large svg {
		margin-bottom: 1px;
	}
	.large .caret {
		margin-top: 2px;
	}
	.draw .large:nth-child(2) {
		width: 30px;
	}
	.draw .large:nth-child(3) {
		width: 36px;
	}
	.draw .stack .caret {
		margin-left: 2px;
	}
	.stack {
		display: flex;
		flex: 1;
		flex-direction: column;
		min-width: 0;
	}
	.tool,
	.row {
		display: flex;
		align-items: center;
		gap: 4px;
		height: 16px;
	}
	.modify .body {
		padding-left: 3px;
	}
	.modify .stack {
		flex: 0 0 48px;
	}
	.modify .stack:last-child {
		flex-basis: 16px;
	}
	.modify .stack:nth-child(3) .caret {
		margin-left: auto;
		margin-right: 6px;
	}
	.annotation .large {
		width: 34px;
	}
	.annotation .large:nth-child(2) {
		width: 36px;
		margin-right: 4px;
	}
	.annotation .stack .caret {
		margin-left: 2px;
	}
	.layers .large {
		width: 41px;
	}
	.layers .row {
		padding-left: 2px;
	}
	.combo {
		box-sizing: border-box;
		gap: 2px;
		height: 14px;
		margin: 1px 1px 1px 0;
		padding: 0 2px;
		background: #4a5567;
	}
	.combo .caret {
		margin-left: auto;
	}
	.swatch {
		width: 8px;
		height: 8px;
		margin-right: 1px;
		border: 1px solid #a7a0a8;
		background: #f50505;
	}
	.layers .swatch {
		margin-left: -2px;
	}
	.fields .swatch {
		margin: 0 5px 0 6px;
	}
	.weight {
		width: 42px;
		height: 6px;
		background: #fff;
	}
	.weight.thin {
		height: 1px;
		background: #8f98a4;
	}
	.block .large {
		width: 29px;
	}
	.block .caret {
		margin-left: 2px;
	}
	.block .large .caret {
		margin-left: 0;
	}
	.properties .large {
		width: 42px;
	}
	.properties .stack:nth-child(2) {
		flex: 0 0 13px;
	}
	.groups .large {
		width: 29px;
	}
	.picked .tool {
		justify-content: center;
	}
	.picked .tool:last-child {
		background: #345370;
		outline: 1px solid #6ba4cf;
		outline-offset: -1px;
	}
	.utilities .large {
		width: 49px;
	}
	.clipboard .large {
		width: 37px;
	}
	.view .large {
		width: 39px;
		padding-top: 3px;
	}
	.touch .large,
	.touch .panel-title {
		width: 28px;
	}

	.files {
		display: flex;
		flex: none;
		align-items: flex-end;
		height: 18px;
		padding-left: 12px;
		border-bottom: 2px solid #3c434c;
	}
	.file {
		width: 85px;
		height: 15px;
		padding: 0 9px;
		border-radius: 5px 5px 0 0;
		background: #2b333d;
		color: #b5bbc3;
	}
	.file.open {
		justify-content: space-between;
		padding: 0 9px 0 6px;
		width: 84px;
		background: #3b4453;
		color: #e2e5e8;
	}
	.add {
		width: 12px;
		height: 12px;
		margin: 0 0 2px 3px;
		justify-content: center;
		border-radius: 50%;
		background: #2b333d;
		font-size: 11px;
	}

	main {
		position: relative;
		z-index: 1;
		flex: 1;
		min-height: 0;
	}
	.drawing {
		width: 100%;
		height: 100%;
	}
	.viewport {
		position: absolute;
		display: flex;
		top: 5px;
		left: 2px;
		color: #e2e5e8;
	}
	.inner {
		position: absolute;
		top: 5px;
		right: 5px;
	}
	.compass {
		position: absolute;
		top: 26px;
		right: 10px;
		color: #aeb3b7;
		font: bold 13px/14px 'Liberation Sans', sans-serif;
	}
	.compass b {
		position: absolute;
	}
	.n {
		top: 1px;
		left: 40px;
	}
	.e {
		top: 38px;
		right: 3px;
	}
	.s {
		bottom: 0;
		left: 40px;
	}
	.w {
		top: 38px;
		left: 0;
	}
	.compass .top {
		top: 38px;
		left: 36px;
		color: #454c53;
		font-size: 8px;
	}
	.wcs {
		position: absolute;
		top: 129px;
		right: 40px;
		width: 32px;
		height: 11px;
		padding-left: 3px;
		border-radius: 3px;
		background: #a0a3ab;
		color: #5b6067;
	}
	.navbar {
		position: absolute;
		top: 157px;
		right: 2px;
		border-radius: 2px;
		background: #636c70;
	}
	.history {
		position: absolute;
		right: 277px;
		bottom: 31px;
		color: #b4b9bd;
		font: 8px/11px 'DejaVu Sans Mono', monospace;
	}
	.history p {
		margin: 2px 0 0;
		background: #444b52;
	}
	.balloon {
		position: absolute;
		box-sizing: border-box;
		right: 0;
		bottom: 3px;
		width: 247px;
		height: 63px;
		padding: 5px 5px 0 10px;
		border-radius: 10px;
		background: #ffffe1;
		color: #333;
	}
	.balloon-head {
		display: flex;
		align-items: center;
		gap: 6px;
		padding-bottom: 4px;
		margin-left: -5px;
	}
	.balloon-head button {
		margin-left: auto;
		padding: 1px;
		border: 1px solid #999;
		background: #fff;
	}
	.balloon p {
		margin: 0;
		white-space: nowrap;
	}
	.balloon a {
		display: inline-block;
		margin-top: 4px;
		color: #4a40d0;
	}
	.tail {
		position: absolute;
		right: 47px;
		top: 62px;
	}
	.command {
		position: absolute;
		display: flex;
		left: 186px;
		right: 183px;
		bottom: 1px;
		height: 16px;
	}
	.command label {
		display: flex;
		flex: 1;
		align-items: center;
		gap: 3px;
		padding: 0 4px 0 3px;
		background: rgb(228 231 230 / 75%);
		border-radius: 2px;
	}
	.command input {
		flex: 1;
		color: #333;
		font: italic 8px/10px 'DejaVu Sans Mono', monospace;
	}
	.command input::placeholder {
		color: #5d6367;
	}
	.upward {
		border: 2px solid transparent;
		border-top: 0;
		border-bottom: 3px solid #565d61;
	}

	footer {
		display: flex;
		flex: none;
		justify-content: space-between;
		align-items: center;
		height: 20px;
		background: #222831;
	}
	.layouts {
		display: flex;
		align-self: flex-start;
		gap: 4px;
		padding-left: 9px;
	}
	.layouts button {
		height: 14px;
		padding: 2px 6px 0;
		border-radius: 0 0 5px 5px;
		background: #2b333d;
		color: #8b929a;
	}
	.layouts .model {
		background: #3b4453;
		color: #d9dde2;
		font-weight: 600;
	}
	.modes {
		display: flex;
		align-items: center;
		padding-right: 2px;
	}
	.stat {
		justify-content: center;
		width: 16px;
		height: 16px;
		background: #303844;
	}
	.stat.on {
		background: #4f82b0;
	}
	.stat.drop {
		width: 12px;
	}
	.stat.word {
		width: 33px;
		color: #e4e7ea;
		font-size: 8px;
	}
	.stat.ratio {
		gap: 3px;
		width: 24px;
	}
	.stat.shapes {
		margin-left: 2px;
	}
	.stat.license {
		margin-left: 5px;
	}
	.stat.clean {
		margin-left: 3px;
	}
	.watermark {
		position: absolute;
		z-index: 2;
		left: 11px;
		bottom: 7px;
		color: #fff;
		font: bold 8px/8px 'Open Sans', sans-serif;
	}
	.watermark small {
		font-size: 8px;
	}
	.watermark div {
		display: flex;
		align-items: center;
		gap: 4px;
		font-size: 12px;
	}
</style>
